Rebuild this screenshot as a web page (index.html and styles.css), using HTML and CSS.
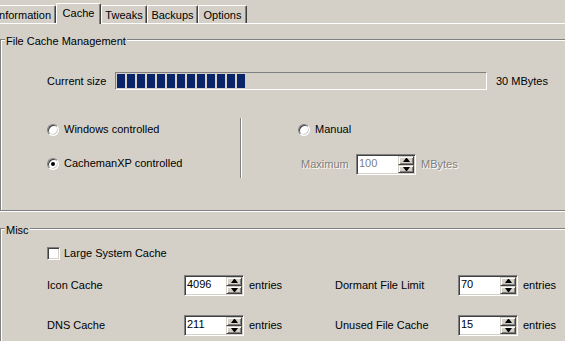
FILE: index.html
```html
<!DOCTYPE html>
<html>
<head>
<meta charset="utf-8">
<title>CachemanXP - Cache</title>
<link rel="stylesheet" href="styles.css">
</head>
<body>
<div class="tabs">
  <div class="tab tab-info">Information</div>
  <div class="tab tab-cache active">Cache</div>
  <div class="tab tab-tweaks">Tweaks</div>
  <div class="tab tab-backups">Backups</div>
  <div class="tab tab-options">Options</div>
</div>

<section class="group group-file">
  <div class="group-title">File Cache Management</div>
  <div class="size-row">
    <span class="size-label">Current size</span>
    <div class="progress">
      <span class="block"></span><span class="block"></span><span class="block"></span><span class="block"></span><span class="block"></span><span class="block"></span><span class="block"></span><span class="block"></span><span class="block"></span><span class="block"></span><span class="block"></span><span class="block"></span><span class="block"></span>
    </div>
    <span class="size-value">30 MBytes</span>
  </div>
  <div class="mode-row">
    <div class="mode-left">
      <div class="option"><span class="radio"></span><span>Windows controlled</span></div>
      <div class="option option-second"><span class="radio checked"></span><span>CachemanXP controlled</span></div>
    </div>
    <div class="separator"></div>
    <div class="mode-right">
      <div class="option"><span class="radio"></span><span>Manual</span></div>
      <div class="max-row">
        <span class="max-label disabled">Maximum</span>
        <div class="spin">
          <span class="spin-value disabled-value">100</span>
          <div class="spin-buttons">
            <span class="spin-btn"><span class="arrow-up"></span></span>
            <span class="spin-btn"><span class="arrow-down"></span></span>
          </div>
        </div>
        <span class="unit disabled">MBytes</span>
      </div>
    </div>
  </div>
</section>

<section class="group group-misc">
  <div class="group-title">Misc</div>
  <div class="option check-row"><span class="checkbox"></span><span>Large System Cache</span></div>
  <div class="cache-grid">
    <span>Icon Cache</span>
    <div class="spin">
      <span class="spin-value">4096</span>
      <div class="spin-buttons">
        <span class="spin-btn"><span class="arrow-up"></span></span>
        <span class="spin-btn"><span class="arrow-down"></span></span>
      </div>
    </div>
    <span class="unit">entries</span>
    <span>Dormant File Limit</span>
    <div class="spin">
      <span class="spin-value">70</span>
      <div class="spin-buttons">
        <span class="spin-btn"><span class="arrow-up"></span></span>
        <span class="spin-btn"><span class="arrow-down"></span></span>
      </div>
    </div>
    <span class="unit">entries</span>

    <span>DNS Cache</span>
    <div class="spin">
      <span class="spin-value">211</span>
      <div class="spin-buttons">
        <span class="spin-btn"><span class="arrow-up"></span></span>
        <span class="spin-btn"><span class="arrow-down"></span></span>
      </div>
    </div>
    <span class="unit">entries</span>
    <span>Unused File Cache</span>
    <div class="spin">
      <span class="spin-value">15</span>
      <div class="spin-buttons">
        <span class="spin-btn"><span class="arrow-up"></span></span>
        <span class="spin-btn"><span class="arrow-down"></span></span>
      </div>
    </div>
    <span class="unit">entries</span>
  </div>
</section>
</body>
</html>
```

FILE: styles.css
```css
body {
  margin: 0;
  width: 565px;
  height: 341px;
  overflow: hidden;
  background: #d4d0c8;
  font-family: "Liberation Sans", Arial, sans-serif;
  font-size: 11px;
  line-height: 13px;
  color: #000;
}

/* ---------- tabs ---------- */
.tabs {
  display: flex;
  align-items: flex-end;
  height: 23px;
  border-bottom: 1px solid #fff;
}
.tab {
  flex: none;
  box-sizing: border-box;
  height: 18px;
  padding-top: 3px;
  text-align: center;
  white-space: nowrap;
  border-top: 1px solid #fff;
  border-left: 1px solid #fff;
  border-right: 1px solid #404040;
  border-radius: 2px 2px 0 0;
  box-shadow: inset -1px 0 0 #808080;
  background: #d4d0c8;
}
.tab.active {
  height: 21px;
  margin-bottom: -1px;
}
.tab-info { width: 65px; margin-left: -9px; }
.tab-cache { width: 45px; }
.tab-tweaks { width: 46px; }
.tab-backups { width: 51px; }
.tab-options { width: 49px; }

/* ---------- group boxes ---------- */
.group {
  box-sizing: border-box;
  border: 1px solid #808080;
  box-shadow: inset 1px 1px 0 #fff, 0 1px 0 #fff;
  margin-right: -20px;
  padding-left: 46px;
}
.group-file {
  margin-top: 15px;
  height: 172px;
}
.group-misc {
  margin-top: 17px;
  height: 140px;
}
.group-title {
  width: max-content;
  margin: -5px 0 0 -42px;
  padding: 0 1px;
  background: #d4d0c8;
}

/* ---------- current size ---------- */
.size-row {
  display: flex;
  align-items: center;
  margin-top: 24px;
  height: 18px;
}
.size-label {
  flex: none;
  width: 68px;
}
.progress {
  flex: none;
  box-sizing: border-box;
  width: 372px;
  height: 18px;
  padding: 1px;
  border: 1px solid;
  border-color: #808080 #fff #fff #808080;
  display: flex;
  gap: 2px;
}
.block {
  width: 8px;
  height: 14px;
  background: #0a246a;
}
.size-value {
  margin-left: 9px;
  white-space: nowrap;
}

/* ---------- mode ---------- */
.mode-row {
  display: flex;
  margin-top: 28px;
  height: 60px;
}
.mode-left {
  width: 193px;
  padding-top: 5px;
}
.separator {
  width: 0;
  border-left: 1px solid #808080;
  border-right: 1px solid #fff;
}
.mode-right {
  padding-top: 5px;
  padding-left: 56px;
}
.option {
  display: flex;
  align-items: center;
  gap: 5px;
  height: 13px;
  white-space: nowrap;
}
.option-second {
  margin-top: 21px;
}
.radio {
  flex: none;
  box-sizing: border-box;
  width: 12px;
  height: 12px;
  border-radius: 50%;
  border: 1px solid;
  border-color: #808080 #fff #fff #808080;
  box-shadow: inset 1px 1px 0 #404040, inset -1px -1px 0 #d4d0c8;
  background: #fff;
  display: flex;
  align-items: center;
  justify-content: center;
}
.radio.checked::after {
  content: "";
  width: 4px;
  height: 4px;
  border-radius: 50%;
  background: #000;
}
.max-row {
  display: flex;
  align-items: center;
  margin-top: 18px;
  margin-left: 3px;
  height: 21px;
}
.max-label {
  flex: none;
  width: 55px;
}
.disabled {
  color: #808080;
  text-shadow: 1px 1px 0 #fff;
}
.disabled-value {
  color: #808080;
}

/* ---------- spin ---------- */
.spin {
  flex: none;
  box-sizing: border-box;
  width: 60px;
  height: 21px;
  padding: 1px;
  border: 1px solid;
  border-color: #808080 #fff #fff #808080;
  box-shadow: inset 1px 1px 0 #404040, inset -1px -1px 0 #d4d0c8;
  background: #fff;
  display: flex;
}
.spin-value {
  flex: 1;
  padding-left: 1px;
  line-height: 15px;
}
.spin-buttons {
  width: 16px;
  display: flex;
  flex-direction: column;
}
.spin-btn {
  flex: 1;
  box-sizing: border-box;
  background: #d4d0c8;
  border: 1px solid;
  border-color: #d4d0c8 #404040 #404040 #d4d0c8;
  box-shadow: inset 1px 1px 0 #fff, inset -1px -1px 0 #808080;
  display: flex;
  align-items: center;
  justify-content: center;
}
.arrow-up {
  width: 1px;
  height: 0;
  border-left: 3px solid transparent;
  border-right: 3px solid transparent;
  border-bottom: 4px solid #000;
}
.arrow-down {
  width: 1px;
  height: 0;
  border-left: 3px solid transparent;
  border-right: 3px solid transparent;
  border-top: 4px solid #000;
}
.unit {
  padding-left: 5px;
  white-space: nowrap;
}

/* ---------- misc ---------- */
.check-row {
  margin-top: 10px;
  gap: 4px;
}
.checkbox {
  flex: none;
  box-sizing: border-box;
  width: 13px;
  height: 13px;
  border: 1px solid;
  border-color: #808080 #fff #fff #808080;
  box-shadow: inset 1px 1px 0 #404040, inset -1px -1px 0 #d4d0c8;
  background: #fff;
}
.cache-grid {
  display: grid;
  grid-template-columns: 137px 60px 91px 123px 60px auto;
  grid-auto-rows: 21px;
  row-gap: 19px;
  align-items: center;
  margin-top: 15px;
  white-space: nowrap;
}
```
